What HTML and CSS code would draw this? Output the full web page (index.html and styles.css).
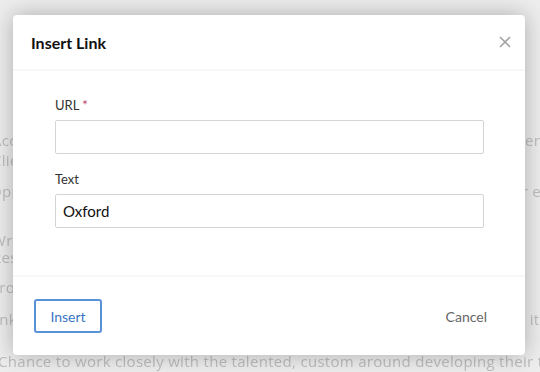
FILE: index.html
```html
<!DOCTYPE html>
<html lang="en">
<head>
    <meta charset="UTF-8">
    <meta name="viewport" content="width=device-width, initial-scale=1.0">
    <title>Insert Link</title>
    <link rel="stylesheet" href="styles.css">
</head>
<body>
<div class="page">
    <p class="line l1">Access collaboration tools to manage your team and keep up the main agenda for everyone</p>
    <p class="line l2">Clients and projects in one place</p>
    <p class="line l3">Opportunities to grow and share with partners who care and are there for everyone</p>
    <p class="line l4">Write and publish, with the team who are always ready to help, now with</p>
    <p class="line l5">Resources</p>
    <p class="line l6">Product roadmaps</p>
    <p class="line l7">Unknown territory, where everyone can see the work of people who make it personal</p>
    <p class="line l8">Chance to work closely with the talented, custom around developing their touch on the best</p>
</div>
<div class="overlay"></div>

<div class="modal">
    <div class="modal-header">
        <h3>Insert Link</h3>
        <button class="close" type="button" aria-label="Close">
            <svg width="12" height="12" viewBox="0 0 12 12"><path d="M1 1L11 11M11 1L1 11" stroke="#a3a3a3" stroke-width="1.6" fill="none"/></svg>
        </button>
    </div>
    <div class="modal-body">
        <label for="url">URL <span class="req">*</span></label>
        <input type="text" id="url">
        <label for="text">Text</label>
        <input type="text" id="text" value="Oxford">
    </div>
    <div class="modal-footer">
        <button class="btn-insert" type="button">Insert</button>
        <button class="btn-cancel" type="button">Cancel</button>
    </div>
</div>
</body>
</html>
```

FILE: styles.css
```css
body {
    margin: 0;
    width: 540px;
    height: 372px;
    overflow: hidden;
    background-color: #ececec;
    font-family: Lato, 'Open Sans', sans-serif;
    color: #222;
}

.page {
    width: 540px;
    height: 372px;
    overflow: hidden;
    padding-top: 130px;
    box-sizing: border-box;
    filter: blur(0.7px);
    color: #a8a8a8;
    font-family: 'Open Sans', sans-serif;
    font-size: 15px;
    letter-spacing: 0.3px;
}

.line {
    margin: 0;
    white-space: nowrap;
}

.l1 { margin-left: -8px; }
.l2 { margin-left: -8px; }
.l3 { margin-left: -10px; margin-top: 11px; }
.l4 { margin-left: -8px; margin-top: 29px; }
.l5 { margin-left: -8px; margin-top: -3px; }
.l6 { margin-left: -10px; margin-top: 10px; }
.l7 { margin-left: -12px; margin-top: 12px; }
.l8 { margin-left: -2px; margin-top: 22px; }

.overlay {
    position: absolute;
    inset: 0;
    background: rgba(240, 240, 240, 0.3);
}

.modal {
    position: absolute;
    left: 13px;
    top: 15px;
    width: 512px;
    height: 340px;
    background: white;
    border-radius: 4px;
    box-shadow: 0 0 22px rgba(0, 0, 0, 0.28);
    display: flex;
    flex-direction: column;
}

.modal-header {
    height: 54px;
    display: flex;
    align-items: center;
    justify-content: space-between;
    padding: 0 10px 0 18px;
    border-bottom: 2px solid #f7f7f7;
}

.modal-header h3 {
    margin: 0;
    font-size: 16px;
    font-weight: bold;
    color: #111;
}

.close {
    border: none;
    background: none;
    padding: 4px;
    cursor: pointer;
    display: flex;
}

.modal-body {
    height: 206px;
    padding: 26px 41px 0 42px;
    box-sizing: border-box;
    border-bottom: 2px solid #f7f7f7;
    display: flex;
    flex-direction: column;
}

.modal-body label {
    font-size: 13px;
    color: #333;
    margin-bottom: 7px;
}

.req {
    color: #c0396b;
}

.modal-body input {
    height: 34px;
    border: 1px solid #d4d4d4;
    border-radius: 2px;
    padding: 0 7px;
    font-family: inherit;
    font-size: 15px;
    color: #111;
    margin-bottom: 17px;
    box-sizing: border-box;
}

.modal-footer {
    flex: 1;
    display: flex;
    align-items: center;
    justify-content: space-between;
    padding: 0 38px 0 21px;
}

.btn-insert {
    width: 68px;
    height: 34px;
    border: 2px solid #5a92d8;
    border-radius: 3px;
    background: white;
    color: #3a77c4;
    font-family: inherit;
    font-size: 14px;
    cursor: pointer;
}

.btn-cancel {
    border: none;
    background: none;
    color: #666;
    font-family: inherit;
    font-size: 14px;
    padding: 0;
    cursor: pointer;
}
```
